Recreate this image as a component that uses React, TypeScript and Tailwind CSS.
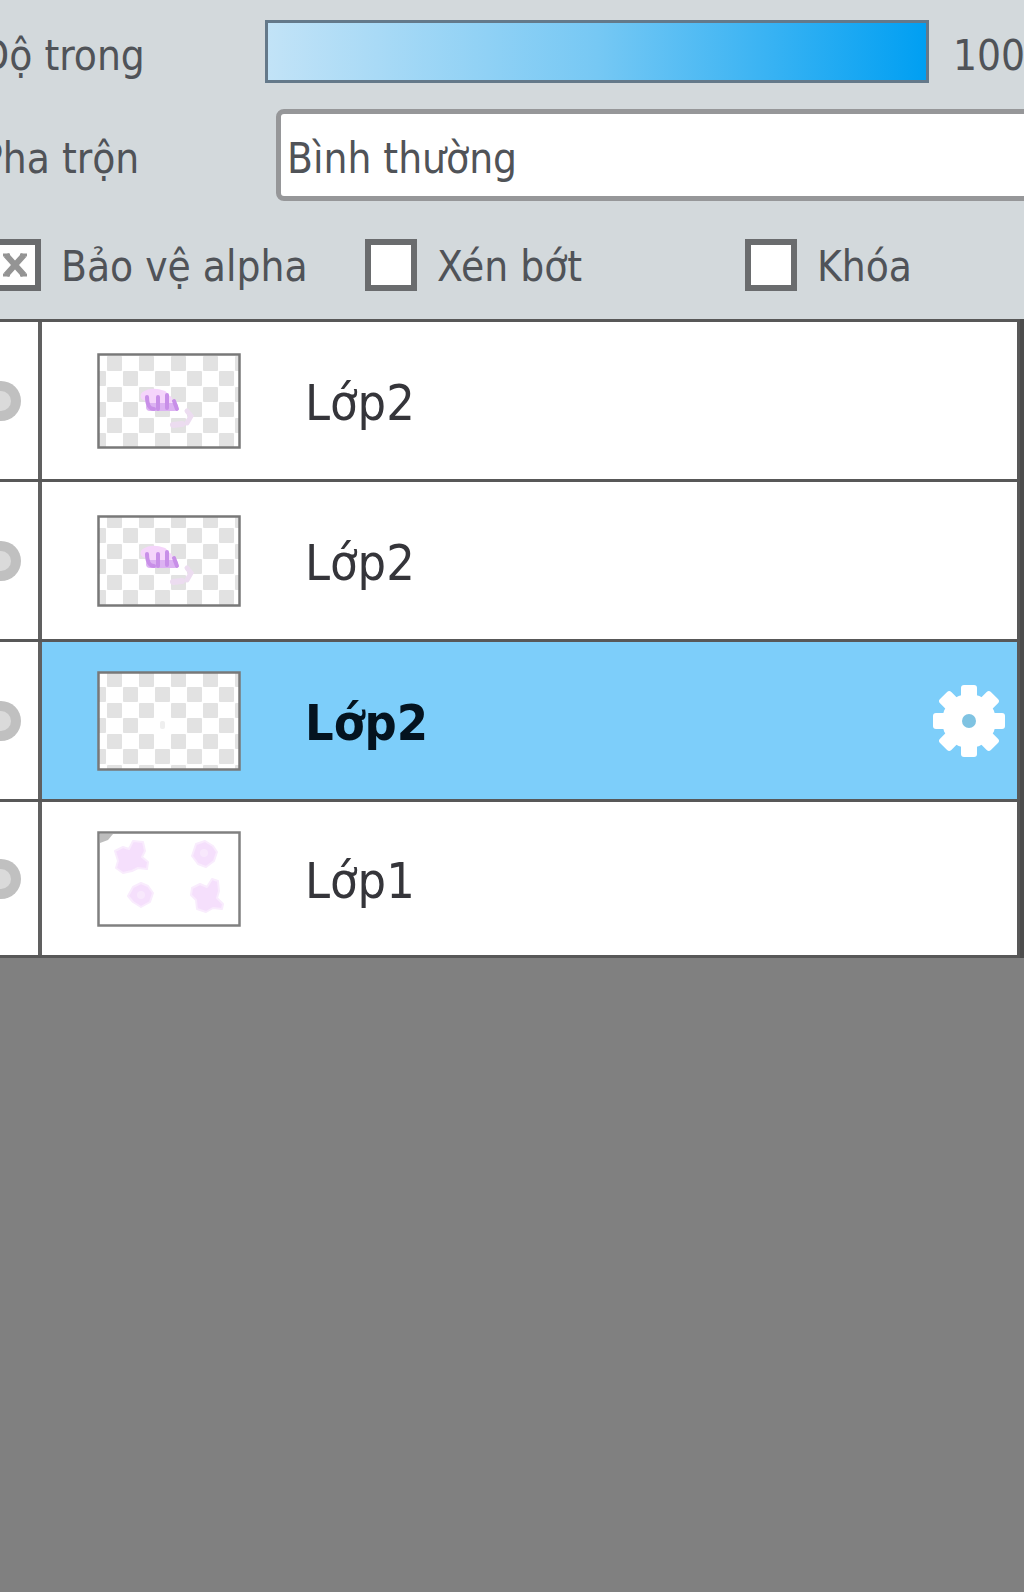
import { useState } from "react";
import type { ReactNode } from "react";

type Layer = {
  id: number;
  name: string;
  thumb: ReactNode;
};

const layersData: Layer[] = [
  { id: 4, name: "Lớp2", thumb: <SketchThumb height={96} offset={3} /> },
  { id: 3, name: "Lớp2", thumb: <SketchThumb height={92} offset={-2} /> },
  { id: 2, name: "Lớp2", thumb: <EmptyThumb /> },
  { id: 1, name: "Lớp1", thumb: <FlowerThumb /> },
];

function Checker({ id, height, offset }: { id: string; height: number; offset: number }) {
  return (
    <>
      <defs>
        <pattern
          id={id}
          x="10"
          y={offset}
          width="32"
          height="31"
          patternUnits="userSpaceOnUse"
        >
          <rect width="32" height="31" fill="#fff" />
          <rect width="15" height="15" rx="1" fill="#e2e2e2" />
          <rect x="16" y="15" width="15" height="15" rx="1" fill="#e2e2e2" />
        </pattern>
      </defs>
      <rect
        x="1.5"
        y="1.5"
        width="141"
        height={height - 3}
        fill={`url(#${id})`}
        stroke="#787878"
        strokeWidth="2.5"
      />
    </>
  );
}

function SketchThumb({ height, offset }: { height: number; offset: number }) {
  return (
    <svg width="144" height={height} viewBox={`0 0 144 ${height}`}>
      <Checker id={`checker-${height}`} height={height} offset={offset} />
      <g transform={`translate(0 ${offset - 3})`} fill="none" strokeLinecap="round">
        <path d="M48 43c6-4 12-3 18-1M55 47h16" stroke="#f5d5fb" strokeWidth="9" />
        <path d="M53 54h24" stroke="#dcb2f2" strokeWidth="8" />
        <path
          d="M50 44c0 8 3 12 7 12M61 44v12M70 42v13M77 48l3 8"
          stroke="#c88fe8"
          strokeWidth="4"
        />
        <path d="M90 58l4 5-4 7" stroke="#ecdcf0" strokeWidth="5" />
        <path d="M76 72l9-1" stroke="#ecdcf0" strokeWidth="6" />
      </g>
    </svg>
  );
}

function EmptyThumb() {
  return (
    <svg width="144" height="100" viewBox="0 0 144 100">
      <Checker id="checker-empty" height={100} offset={1} />
      <rect x="57" y="47" width="16" height="15" fill="#fff" />
      <rect x="63" y="50" width="5" height="8" rx="2" fill="#efefef" />
    </svg>
  );
}

function FlowerThumb() {
  return (
    <svg width="144" height="96" viewBox="0 0 144 96">
      <rect x="1.5" y="1.5" width="141" height="93" fill="#fff" stroke="#808080" strokeWidth="2.5" />
      <path d="M3 3h13l-5 6-8 3z" fill="#bdbdbd" />
      <g fill="#f5dffc" stroke="#f9ecfd" strokeWidth="2" strokeLinejoin="round">
        <path d="M18 20l8-4 6 2 4-8 10 1 2 9-3 6 6 5-1 7-9-1-6 3-9 2-7-5 2-7z" />
        <path d="M99 13l9-3 8 5 4 6-3 9-8 6-8-3-6-8z" />
        <path d="M36 56l8-4 7 3 5 7-3 9-9 5-8-5-5-6z" />
        <path d="M95 57l8-4 7 3 5-8 6 2 1 10-2 7 6 6-1 5-9-1-7 4-9-3-1-9-5-5z" />
      </g>
      <g fill="#fff" opacity="0.3">
        <circle cx="107" cy="22" r="4" />
        <circle cx="44" cy="64" r="4" />
      </g>
    </svg>
  );
}

function VisibilityDot() {
  return (
    <svg width="36" height="40" viewBox="0 0 36 40" className="block">
      <circle cx="1" cy="20" r="20" fill="#c0c0c0" />
      <circle cx="1" cy="20" r="10" fill="#dadada" />
    </svg>
  );
}

function Gear() {
  return (
    <svg width="76" height="76" viewBox="-38 -38 76 76" className="block">
      <g fill="#fff">
        <circle r="27" />
        <rect x="-8" y="-36" width="16" height="72" rx="3" />
        <rect x="-36" y="-8" width="72" height="16" rx="3" />
        <rect x="-8" y="-36" width="16" height="72" rx="3" transform="rotate(45)" />
        <rect x="-8" y="-36" width="16" height="72" rx="3" transform="rotate(-45)" />
      </g>
      <circle r="7" fill="#7fc3e2" />
    </svg>
  );
}

function CheckOption({ label, defaultCrossed }: { label: string; defaultCrossed?: boolean }) {
  const [crossed, setCrossed] = useState(!!defaultCrossed);

  return (
    <label className="flex items-center gap-5 whitespace-nowrap">
      <span className="grid shrink-0 place-items-center">
        <input
          type="checkbox"
          checked={crossed}
          onChange={(e) => setCrossed(e.target.checked)}
          className="col-start-1 row-start-1 size-[52px] appearance-none border-[6px] border-[#6a6c6e] bg-white"
        />
        {crossed && (
          <svg
            width="28"
            height="28"
            viewBox="0 0 28 28"
            className="pointer-events-none col-start-1 row-start-1"
          >
            <path
              d="M5 4l18 20M23 4L5 24"
              fill="none"
              stroke="#949494"
              strokeWidth="6"
            />
            <path
              d="M2 4h7M19 4h7M2 24h7M19 24h7"
              fill="none"
              stroke="#949494"
              strokeWidth="3"
            />
          </svg>
        )}
      </span>
      <span className="-mb-1">{label}</span>
    </label>
  );
}

export default function App() {
  const [opacity, setOpacity] = useState(100);
  const [selected, setSelected] = useState(2);

  return (
    <div className="min-h-screen overflow-hidden bg-[#808080] font-['DejaVu_Sans_Condensed','Noto_Sans',sans-serif] text-[42px] leading-[52px] text-[#505358]">
      {/* Layer settings */}
      <div className="-ml-5 bg-[#d3d9dc] pt-5 pb-7">
        <div className="flex h-[63px] items-center">
          <label htmlFor="opacity" className="w-[285px] shrink-0 pt-2 whitespace-nowrap">
            Độ trong
          </label>
          <input
            id="opacity"
            type="range"
            min="0"
            max="100"
            value={opacity}
            onChange={(e) => setOpacity(Number(e.target.value))}
            className="h-[63px] min-w-0 flex-1 appearance-none border-[3px] border-[#64798a] bg-linear-to-r/srgb from-[#c2e3f7] via-[#76c8f4] to-[#009ff2] [&::-webkit-slider-thumb]:appearance-none"
          />
          <output htmlFor="opacity" className="w-[95px] shrink-0 pt-2 pl-6">
            {opacity}
          </output>
        </div>

        <div className="mt-[26px] flex items-center">
          <label htmlFor="blend" className="w-[296px] shrink-0 pt-2 whitespace-nowrap">
            Pha trộn
          </label>
          <select
            id="blend"
            className="-mr-3 h-[92px] min-w-0 flex-1 appearance-none rounded-lg border-[5px] border-[#969799] bg-white pt-2 pl-[6px]"
          >
            <option>Bình thường</option>
          </select>
        </div>

        <div className="mt-[38px] grid grid-cols-[376px_380px_1fr] pl-[9px]">
          <CheckOption label="Bảo vệ alpha" defaultCrossed />
          <CheckOption label="Xén bớt" />
          <CheckOption label="Khóa" />
        </div>
      </div>

      {/* Layers */}
      <div className="flex border-r-4 border-[#4c4c4c]">
        <ul className="min-w-0 flex-1 border-t-3 border-r-3 border-[#585858] bg-white text-[50px] text-[#35353a]">
          {layersData.map((layer) => {
            const active = layer.id === selected;
            return (
              <li
                key={layer.id}
                className="flex h-40 border-b-3 border-[#585858] last:h-[156px]"
              >
                <button
                  aria-label="Ẩn hoặc hiện lớp"
                  className="w-[42px] shrink-0 border-r-4 border-[#606060] bg-white"
                >
                  <VisibilityDot />
                </button>
                <div
                  className={`flex min-w-0 flex-1 items-center pr-[10px] pl-[55px] ${
                    active ? "bg-[#7dcefa]" : "bg-white"
                  }`}
                >
                  <button
                    onClick={() => setSelected(layer.id)}
                    className={`flex flex-1 items-center gap-16 text-left ${
                      active ? "font-bold text-[#04131f]" : ""
                    }`}
                  >
                    {layer.thumb}
                    <span className="pt-1">{layer.name}</span>
                  </button>
                  {active && (
                    <button aria-label="Cài đặt lớp">
                      <Gear />
                    </button>
                  )}
                </div>
              </li>
            );
          })}
        </ul>
      </div>
    </div>
  );
}
